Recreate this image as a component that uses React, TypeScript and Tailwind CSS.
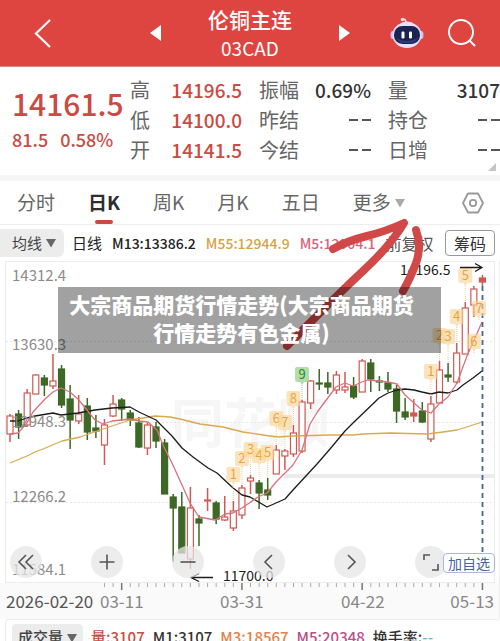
import { clsx } from "clsx";

type Candle = {
  up: boolean;
  high: number;
  top: number;
  bottom: number;
  low: number;
  solid?: boolean;
};

const u = (high: number, top: number, bottom: number, low: number, solid = false): Candle => ({
  up: true, high, top, bottom, low, solid,
});
const d = (high: number, top: number, bottom: number, low: number): Candle => ({
  up: false, high, top, bottom, low,
});

const CANDLES: Candle[] = [
  u(414, 416, 434, 442), d(410, 414, 427, 439), u(389, 393, 425, 426), u(374, 375, 394, 394),
  d(375, 378, 385, 396), u(354, 381, 386, 389), d(365, 369, 405, 408), d(385, 399, 420, 449),
  u(395, 414, 421, 424), d(398, 406, 432, 440), d(415, 428, 431, 438), u(419, 425, 445, 465),
  u(395, 404, 416, 417), d(398, 400, 409, 421), d(410, 413, 420, 426), d(417, 423, 447, 448),
  u(423, 425, 448, 455), d(422, 427, 441, 448), d(439, 443, 494, 494), d(494, 497, 508, 562),
  d(492, 507, 553, 553), u(487, 508, 559, 569), d(515, 519, 523, 546), u(488, 500, 501, 511, true),
  d(501, 503, 519, 524), u(496, 517, 520, 521), u(501, 511, 528, 531), u(485, 488, 515, 519),
  u(475, 478, 481, 494), d(480, 483, 493, 509), d(478, 490, 495, 500), u(445, 450, 474, 474),
  u(449, 451, 456, 470), u(425, 433, 454, 457), u(400, 402, 451, 453), u(380, 381, 403, 409),
  d(369, 383, 384, 390), d(372, 383, 387, 394), u(371, 375, 390, 394), u(372, 387, 390, 393),
  d(377, 386, 397, 399), u(359, 361, 392, 392), d(359, 363, 379, 392), d(376, 381, 382, 391),
  d(372, 383, 389, 392), d(385, 389, 411, 423), d(398, 412, 417, 420), u(399, 413, 416, 422, true),
  d(402, 411, 422, 423), u(396, 404, 439, 442), u(361, 370, 403, 403), d(363, 375, 377, 382),
  u(343, 353, 382, 384), u(302, 308, 354, 354), u(286, 289, 305, 317), u(275, 278, 282, 286, true),
];

const STEP = 8.59;
const xOf = (i: number) => 10 + i * STEP;

const M13 =
  "10,421 18,421 27,418 35,416 53,413 61,415 78,413 95,410 112,408 130,407 139,412 156,420 172,436 182,448 193,457 208,468 217,473 232,487 242,495 250,497 267,507 285,499 293,490 305,477 317,464 330,449 345,431 353,423 379,398 388,393 397,390 405,389 414,390 422,392 431,394 439,392 448,393 457,390 463,385 473,378 482,371";
const M55 =
  "10,463 27,456 35,452 43,449 62,441 80,437 103,429 130,420 143,418 155,416 170,417 180,419 200,424 223,427 243,432 263,435 277,437 293,436 330,435 353,435 363,434 390,433 427,434 443,432 457,430 473,425 482,422";
const M5 =
  "10,434 18,433 27,423 33,412 45,399 53,392 61,388 70,392 78,399 87,410 95,420 103,424 112,421 130,419 139,421 148,422 157,430 163,445 172,463 182,485 190,503 199,517 215,520 225,514 233,513 242,508 258,497 267,493 277,481 293,465 302,450 310,424 318,411 330,395 336,387 345,383 353,386 362,382 368,380 388,382 397,384 405,395 414,403 422,410 431,413 439,404 448,397 457,383 467,356 482,322";

const MARKS = [
  { n: 1, i: 26, y: 475 }, { n: 2, i: 27, y: 459 }, { n: 3, i: 28, y: 450 },
  { n: 4, i: 29, y: 456 }, { n: 5, i: 30, y: 453 }, { n: 6, i: 31, y: 419 },
  { n: 7, i: 32, y: 423 }, { n: 8, i: 33, y: 399 }, { n: 9, i: 34, y: 375 },
  { n: 1, i: 49, y: 372 }, { n: 2, i: 50, y: 336 }, { n: 3, i: 51, y: 337 },
  { n: 4, i: 52, y: 317 }, { n: 5, i: 53, y: 276 }, { n: 6, i: 54, y: 342 },
  { n: 7, i: 54.6, y: 309 },
];

const PRICES = [
  { label: "14312.4", y: 281 },
  { label: "13630.3", y: 350 },
  { label: "12948.3", y: 427 },
  { label: "12266.2", y: 502 },
  { label: "11584.1", y: 575 },
];

const QUOTES = [
  [["高", "14196.5"], ["低", "14100.0"], ["开", "14141.5"]],
  [["振幅", "0.69%"], ["昨结", "--"], ["今结", "--"]],
  [["量", "3107"], ["持仓", "--"], ["日增", "--"]],
];

const TABS = ["分时", "日K", "周K", "月K", "五日"];

const TOOLS = [
  { label: "最早", d: "M16 9 9 16l7 7M23 9l-7 7 7 7" },
  { label: "放大", d: "M16 8.500v15M8.500 16h15" },
  { label: "缩小", d: "M8.500 16h15" },
  { label: "向左", d: "M19 9l-7 7 7 7" },
  { label: "向右", d: "M14 9l7 7-7 7" },
  { label: "全屏", d: "M9 14V9h6M23 18v6h-6" },
];

function Caret({ className }: { className?: string }) {
  return (
    <svg viewBox="0 0 10 10" className={clsx("size-2.5 fill-current", className)} aria-hidden>
      <path d="M0 1h10L5 9.500z" />
    </svg>
  );
}

function Robot() {
  return (
    <svg viewBox="0 0 34 32" className="h-8 w-[34px]" aria-hidden>
      <path d="M16 6c0-3-1-4-3-4" fill="none" stroke="#f3e9fb" strokeWidth="1.500" />
      <circle cx="12.500" cy="2.500" r="1.800" fill="#f7d9e6" />
      <path d="M11 6q6-3 12 0z" fill="#f3e9fb" />
      <ellipse cx="2.500" cy="18" rx="2" ry="4" fill="#cdbdf0" />
      <ellipse cx="31.500" cy="18" rx="2" ry="4" fill="#cdbdf0" />
      <ellipse cx="17" cy="18" rx="14.500" ry="13" fill="#e7def9" />
      <rect x="4" y="9" width="26" height="18" rx="8.500" fill="#1b2450" />
      <path d="M6 20q2 6 8 6h6q6 0 8-6-4 4-11 4T6 20" fill="#2b3a78" />
      <rect x="11.500" y="14.500" width="3" height="7" rx="1.200" fill="#fff" />
      <rect x="19" y="14.500" width="3" height="7" rx="1.200" fill="#fff" />
    </svg>
  );
}

function Header() {
  return (
    <header className="grid h-[67px] grid-cols-[1fr_200px_1fr] items-center border-b border-[#c9908e] bg-[#de4440] text-white">
      <button className="ml-8 justify-self-start" aria-label="返回">
        <svg viewBox="0 0 22 30" className="h-[30px] w-[22px]" fill="none" stroke="currentColor" strokeWidth="2.200">
          <path d="M18 2 4 15.500 18 29" />
        </svg>
      </button>
      <div className="flex items-center justify-between">
        <button aria-label="上一个">
          <svg viewBox="0 0 12 16" className="h-4 w-3 fill-current"><path d="M11 0v16L0 8z" /></svg>
        </button>
        <div className="text-center">
          <h1 className="text-[21px] leading-[30px] font-medium">伦铜主连</h1>
          <p className="text-[19px] leading-7">03CAD</p>
        </div>
        <button aria-label="下一个">
          <svg viewBox="0 0 12 16" className="h-4 w-3 fill-current"><path d="M1 0v16l11-8z" /></svg>
        </button>
      </div>
      <div className="flex items-center gap-6 pl-10">
        <button aria-label="智能助手"><Robot /></button>
        <button aria-label="搜索">
          <svg viewBox="0 0 28 28" className="size-7" fill="none" stroke="currentColor" strokeWidth="1.900">
            <circle cx="13" cy="13" r="12" />
            <path d="m21 21 6 6" />
          </svg>
        </button>
      </div>
    </header>
  );
}

function NoValue() {
  return (
    <span className="flex h-full items-center gap-1" role="img" aria-label="无数据">
      <i className="h-0.5 w-[9px] bg-[#555]" />
      <i className="h-0.5 w-[9px] bg-[#555]" />
    </span>
  );
}

function Quote() {
  return (
    <section className="relative grid grid-cols-[130px_1fr] border-b-[6px] border-[#f5f5f5] pt-2 pb-2.5">
      <div className="pt-2 text-[#cb4a43]">
        <p className="pl-3 text-[30px] leading-10 font-medium">14161.5</p>
        <p className="flex gap-3 pl-3 text-[18px] leading-8 font-medium">
          <span>81.5</span>
          <span>0.58%</span>
        </p>
      </div>
      <div className="grid grid-cols-3 gap-[17px]">
        {QUOTES.map((rows, col) => (
          <dl key={col}>
            {rows.map(([label, value]) => (
              <div key={label} className="flex justify-between leading-[30px]">
                <dt className="text-[20px] text-[#666]">{label}</dt>
                <dd className={clsx("text-[19px] font-medium", col === 0 ? "text-[#cb4a43]" : "text-[#333]")}>
                  {value === "--" ? <NoValue /> : value}
                </dd>
              </div>
            ))}
          </dl>
        ))}
      </div>
      <svg viewBox="0 0 8 8" className="absolute right-1 bottom-1 size-2 fill-[#c4c4c4]" aria-hidden>
        <path d="M8 0v8H0z" />
      </svg>
    </section>
  );
}

function Tabs() {
  return (
    <nav className="flex h-11 items-center gap-[33px] border-b border-[#eee] pr-4 pl-[17px] text-[19px] text-[#666]">
      {TABS.map((tab) => (
        <button
          key={tab}
          className={clsx("relative h-full", tab === "日K" && "font-bold text-[#2d2d2d]")}
        >
          {tab}
          {tab === "日K" && (
            <span className="absolute inset-x-[7px] bottom-0 h-1 rounded-full bg-[#cb4a43]" />
          )}
        </button>
      ))}
      <button className="flex items-center gap-1">
        更多 <Caret className="text-[#aaa]" />
      </button>
      <button className="ml-auto" aria-label="设置">
        <svg viewBox="0 0 22 22" className="size-[22px]" fill="none" stroke="#999" strokeWidth="1.800" strokeLinejoin="round">
          <path d="M6 1.500h10L21 11l-5 9.500H6L1 11z" />
          <circle cx="11" cy="11" r="3.200" />
        </svg>
      </button>
    </nav>
  );
}

function Averages() {
  return (
    <div className="flex h-9 items-center text-[14px] whitespace-nowrap">
      <button className="flex h-7 items-center gap-1 rounded-r-md bg-[#ececec] pr-2 pl-3 text-[15px] text-[#444]">
        均线 <Caret className="text-[#666]" />
      </button>
      <span className="ml-2 text-[15px] text-[#222]">日线</span>
      <span className="ml-2.5 font-medium text-[#222]">M13:13386.2</span>
      <span className="ml-2.5 font-medium text-[#d5a445]">M55:12944.9</span>
      <span className="ml-2.5 font-medium text-[#d9637a]">M5:12904.1</span>
      <span className="ml-2.5 text-[16px] text-[#555]">前复权</span>
      <button className="mr-[5px] ml-auto h-[26px] rounded border border-[#999] px-2 text-[16px] leading-none text-[#333]">
        筹码
      </button>
    </div>
  );
}

function Chart() {
  return (
    <svg viewBox="0 261 500 358" className="block h-auto w-full" role="img" aria-label="日K线图">
      <rect x="0" y="583" width="500" height="36" fill="#fafafa" />
      <rect x="5.500" y="261.500" width="489" height="321" fill="#fff" stroke="#ececec" />
      <path d="M499.500 261v358" stroke="#ececec" />
      <text x="171" y="443" fontSize="53" fontWeight="700" fill="#f6f6f6">同花顺</text>
      <path d="M6 341.500h488M6 422.500h488M6 502.500h488" stroke="#e6e6e6" strokeDasharray="2 2" />
      <path d="M284 476h210" stroke="#ebebeb" strokeWidth="4" />

      {CANDLES.map((c, i) => {
        const x = xOf(i);
        const color = c.up ? "#cf5a53" : "#3d6825";
        return (
          <g key={i} stroke={color}>
            <path d={`M${x} ${c.high}V${c.top}M${x} ${c.bottom}V${c.low}`} strokeWidth="1.500" />
            <rect
              x={x - 3}
              y={c.top}
              width="6"
              height={c.bottom - c.top}
              fill={c.up && !c.solid ? "#fff" : color}
              strokeWidth="1.200"
            />
          </g>
        );
      })}

      <g fill="none" strokeWidth="1.300" strokeLinejoin="round">
        <polyline points={M55} stroke="#dba94f" />
        <polyline points={M13} stroke="#1c1c1c" />
        <polyline points={M5} stroke="#d9727f" />
      </g>
      <path d="M482.500 286v268" stroke="#4464a8" strokeWidth="1.800" strokeDasharray="5 4" />

      {MARKS.map(({ n, i, y }) => {
        const x = xOf(i);
        const green = n === 9;
        return (
          <g key={`${n}-${i}`}>
            <path
              d={`M${x} ${y + 10}V${Math.max(y + 12, CANDLES[Math.floor(i)].high)}`}
              stroke={green ? "#a5cf9c" : "#efcf98"}
              strokeDasharray="1 1"
            />
            <path
              d={`M${x - 5} ${y - 8}h10q2 0 2 2v11q0 2-2 2h-3l-2 3-2-3h-3q-2 0-2-2v-11q0-2 2-2z`}
              fill={green ? "#a9dba1" : "#f9d59a"}
              fillOpacity={green ? 0.9 : 0.65}
            />
            <text x={x} y={y + 4} fontSize="13" textAnchor="middle" fill={green ? "#35852d" : "#e9a440"}>
              {n}
            </text>
          </g>
        );
      })}

      <g fontSize="15" fill="#8c8c8c">
        {PRICES.map((p) => (
          <text key={p.label} x="12" y={p.y}>{p.label}</text>
        ))}
      </g>

      <g fontSize="14" fill="#1c1c1c">
        <text x="400" y="275">14196.5</text>
        <text x="223" y="581">11700.0</text>
      </g>
      <g fill="none" stroke="#1c1c1c" strokeWidth="1.300">
        <path d="M460 267.500h22M475 263.500l7 4-7 4" />
        <path d="M213 577.500h-22M199 573.500l-8 4 8 4" />
      </g>

      {CANDLES.map((_, i) => {
        if (i < 11) return null;
        const major = (i - 13) % 14 === 0;
        return (
          <path
            key={i}
            d={`M${xOf(i)} 583v${major ? 7 : 4}`}
            stroke={major ? "#777" : "#aaa"}
            strokeWidth={major ? 1.5 : 1}
          />
        );
      })}
      <g fontSize="17" fill="#888">
        <text x="6" y="608" fill="#555">2026-02-20</text>
        <text x="100" y="608">03-11</text>
        <text x="220" y="608">03-31</text>
        <text x="341" y="608">04-22</text>
        <text x="494" y="608" textAnchor="end">05-13</text>
      </g>
    </svg>
  );
}

function ChartTools() {
  return (
    <>
      <div className="absolute bottom-[41px] left-2.5 flex gap-[49px]">
        {TOOLS.map((tool) => (
          <button key={tool.label} aria-label={tool.label} className="size-8 rounded-full bg-[#e6e6e6]/75">
            <svg viewBox="0 0 32 32" fill="none" stroke="#555" strokeWidth="1.600">
              <path d={tool.d} />
            </svg>
          </button>
        ))}
      </div>
      <button className="absolute right-[5px] bottom-[46px] h-5 rounded-sm border border-[#a9b9dd] bg-white px-1 text-[14px] leading-none text-[#4464a8]">
        加自选
      </button>
    </>
  );
}

function Volume() {
  return (
    <section className="ml-[5px] flex h-9 items-center gap-2 rounded-t border-t border-l border-[#ececec] pl-1.5 text-[15px] font-medium whitespace-nowrap">
      <button className="flex h-7 items-center gap-1 rounded bg-[#ececec] px-1.5 text-[#444]">
        成交量 <Caret className="text-[#666]" />
      </button>
      <span className="text-[#cb4a43]">量:3107</span>
      <span className="text-[#333]">M1:3107</span>
      <span className="text-[#e0824a]">M3:18567</span>
      <span className="text-[#b9508a]">M5:20348</span>
      <span className="text-[#333]">
        换手率:<span className="text-[#6cb2dc]">--</span>
      </span>
    </section>
  );
}

export default function App() {
  return (
    <main className="h-screen overflow-hidden bg-white font-['Noto_Sans_CJK_SC',sans-serif]">
      <Header />
      <Quote />
      <Tabs />
      <div className="relative">
        <Averages />
        <Chart />
        <ChartTools />

        {/* hand-drawn arrow */}
        <svg
          viewBox="280 215 150 140"
          className="pointer-events-none absolute -top-2.5 left-[56%] w-[30%]"
          fill="none"
          stroke="#d04848"
          strokeWidth="8"
          strokeLinecap="round"
          strokeLinejoin="round"
          aria-hidden
        >
          <path d="M333 249q14-8 34-13t37-13q-13 22-41 48T287 346" />
          <path d="M416 230q6 17 0 33t-13 28" />
        </svg>

        <div className="absolute top-[62px] right-[59px] left-[58px] bg-black/37 pt-[3px] pr-6 pb-[7px] pl-2 text-center text-[21px] leading-7 font-black text-white">
          大宗商品期货行情走势(大宗商品期货行情走势有色金属)
        </div>
      </div>
      <Volume />
    </main>
  );
}
